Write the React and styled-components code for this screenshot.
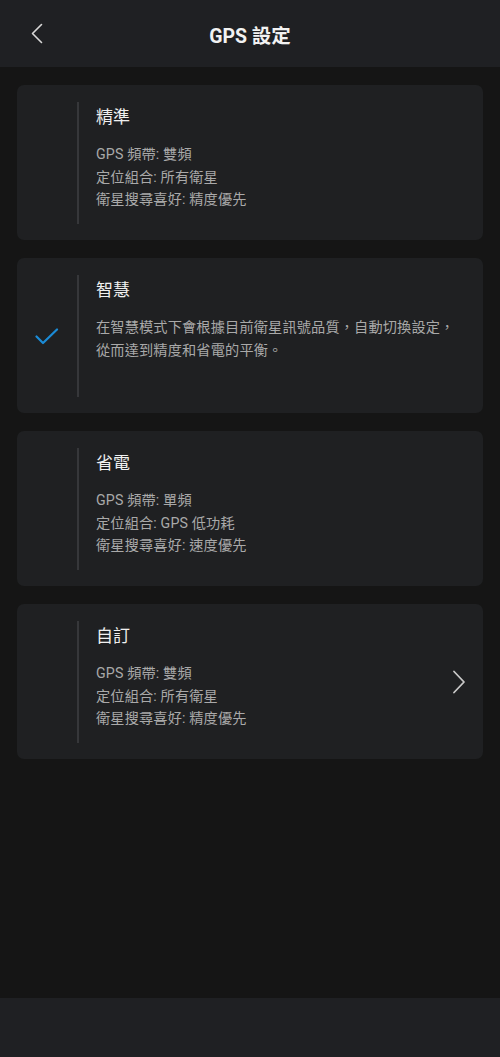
import React from "react";
import styled, { createGlobalStyle } from "styled-components";

const Global = createGlobalStyle`
  html, body { margin: 0; padding: 0; background: #151515; }
  body { font-family: Roboto, "Noto Sans CJK TC", sans-serif; }
  * { box-sizing: border-box; }
`;

const Page = styled.div`
  width: 500px;
  height: 1057px;
  display: flex;
  flex-direction: column;
  background: #151515;
  overflow: hidden;
`;

const Header = styled.header`
  height: 67px;
  flex: none;
  background: #1f2023;
  display: grid;
  grid-template-columns: 60px 1fr 60px;
  align-items: center;
`;

const BackButton = styled.button`
  border: 0;
  background: none;
  padding: 0 0 0 30px;
  height: 67px;
  display: flex;
  align-items: center;
  cursor: pointer;
`;

const Title = styled.h1`
  margin: 0;
  text-align: center;
  color: #f2f2f2;
  font-size: 19.5px;
  font-weight: 700;
  line-height: 24px;
  padding-top: 6px;
`;

const Main = styled.main`
  flex: 1;
  padding: 18px 17px;
  display: flex;
  flex-direction: column;
  gap: 18px;
`;

const Card = styled.div`
  height: 155px;
  background: #1f2022;
  border-radius: 7px;
  display: flex;
  align-items: stretch;
  padding: 17px 17px 16px 0;
`;

const Mark = styled.div`
  width: 60px;
  flex: none;
  display: flex;
  align-items: center;
  justify-content: center;
  padding-top: 1px;
`;

const Divider = styled.div`
  width: 2px;
  flex: none;
  background: #36373a;
`;

const Content = styled.div`
  flex: 1;
  padding: 3px 0 0 17px;
  display: flex;
  flex-direction: column;
`;

const CardTitle = styled.div`
  color: #f0f0f0;
  font-size: 17px;
  font-weight: 400;
  line-height: 24px;
  margin-bottom: 14px;
`;

const Line = styled.div`
  color: #a9a9a9;
  font-size: 14.2px;
  line-height: 22.5px;
  letter-spacing: 0.15px;
`;

const Trail = styled.div`
  flex: none;
  display: flex;
  align-items: center;
`;

const Footer = styled.footer`
  height: 59px;
  flex: none;
  background: #1f2023;
`;

const BackIcon = () => (
  <svg width="14" height="22" viewBox="0 0 14 22">
    <path d="M11.5 1.5 L2.5 10.5 L11.5 19.5" fill="none" stroke="#d8d8d8" strokeWidth="1.6" strokeLinecap="round" strokeLinejoin="round" />
  </svg>
);

const Check = () => (
  <svg width="24" height="18" viewBox="0 0 24 18">
    <path d="M1.5 8.5 L8 15 L22 1.5" fill="none" stroke="#1b8bd6" strokeWidth="2.2" strokeLinecap="round" strokeLinejoin="round" />
  </svg>
);

const Chevron = () => (
  <svg width="14" height="24" viewBox="0 0 14 24">
    <path d="M2 1.5 L12 12 L2 22.5" fill="none" stroke="#c9c9c9" strokeWidth="1.8" strokeLinecap="round" strokeLinejoin="round" />
  </svg>
);

const modes = [
  { title: "精準", lines: ["GPS 頻帶: 雙頻", "定位組合: 所有衛星", "衛星搜尋喜好: 精度優先"] },
  { title: "智慧", lines: ["在智慧模式下會根據目前衛星訊號品質，自動切換設定，", "從而達到精度和省電的平衡。"], selected: true },
  { title: "省電", lines: ["GPS 頻帶: 單頻", "定位組合: GPS 低功耗", "衛星搜尋喜好: 速度優先"] },
  { title: "自訂", lines: ["GPS 頻帶: 雙頻", "定位組合: 所有衛星", "衛星搜尋喜好: 精度優先"], more: true },
];

export default function App() {
  return (
    <Page>
      <Global />
      <Header>
        <BackButton aria-label="back"><BackIcon /></BackButton>
        <Title>GPS 設定</Title>
        <span />
      </Header>
      <Main>
        {modes.map((m) => (
          <Card key={m.title}>
            <Mark>{m.selected && <Check />}</Mark>
            <Divider />
            <Content>
              <CardTitle>{m.title}</CardTitle>
              {m.lines.map((l) => (
                <Line key={l}>{l}</Line>
              ))}
            </Content>
            {m.more && (
              <Trail><Chevron /></Trail>
            )}
          </Card>
        ))}
      </Main>
      <Footer />
    </Page>
  );
}
